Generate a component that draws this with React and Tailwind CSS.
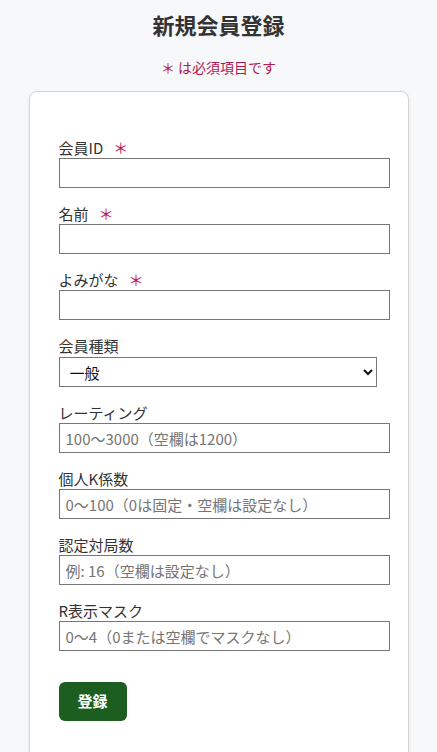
import React from "react";

const font = { fontFamily: '"Noto Sans CJK JP", "Noto Sans", sans-serif' };

function Req() {
  return <span className="ml-[10px] text-[#c2185b]">＊</span>;
}

function Field({ label, req, placeholder }) {
  return (
    <div className="mb-[16px]">
      <label className="block h-[20px] text-[15px] leading-[20px] text-[#333]">
        {label}
        {req && <Req />}
      </label>
      <input
        type="text"
        placeholder={placeholder}
        className="block h-[30px] w-[331px] border border-[#767676] bg-white px-[6px] text-[15px] text-[#333] placeholder:text-[#757575] outline-none"
      />
    </div>
  );
}

export default function App() {
  return (
    <div className="min-h-[752px] bg-[#f7f8fa] pt-[9px]" style={font}>
      <h1 className="text-center text-[22px] font-bold leading-[30px] text-[#333]">新規会員登録</h1>
      <p className="mt-[18px] text-center text-[14px] leading-[20px] text-[#b0184f]">＊ は必須項目です</p>
      <div className="mx-auto mt-[14px] w-[380px] rounded-[8px] border border-[#d4d4d4] bg-white px-[29px] pb-[40px] pt-[46px] shadow-[0_1px_4px_rgba(0,0,0,0.06)]">
        <Field label="会員ID" req />
        <Field label="名前" req />
        <Field label="よみがな" req />
        <div className="mb-[16px]">
          <label className="block h-[21px] text-[15px] leading-[20px] text-[#333]">会員種類</label>
          <select
            defaultValue="一般"
            className="block h-[30px] w-[318px] border border-[#767676] bg-white pl-[6px] text-[15px] text-[#111] outline-none"
          >
            <option>一般</option>
          </select>
        </div>
        <Field label="レーティング" placeholder="100〜3000（空欄は1200）" />
        <Field label="個人K係数" placeholder="0〜100（0は固定・空欄は設定なし）" />
        <Field label="認定対局数" placeholder="例: 16（空欄は設定なし）" />
        <Field label="R表示マスク" placeholder="0〜4（0または空欄でマスクなし）" />
        <button className="mt-[15px] h-[39px] w-[68px] rounded-[6px] bg-[#1b5e20] text-[15px] font-bold text-white">
          登録
        </button>
      </div>
    </div>
  );
}
